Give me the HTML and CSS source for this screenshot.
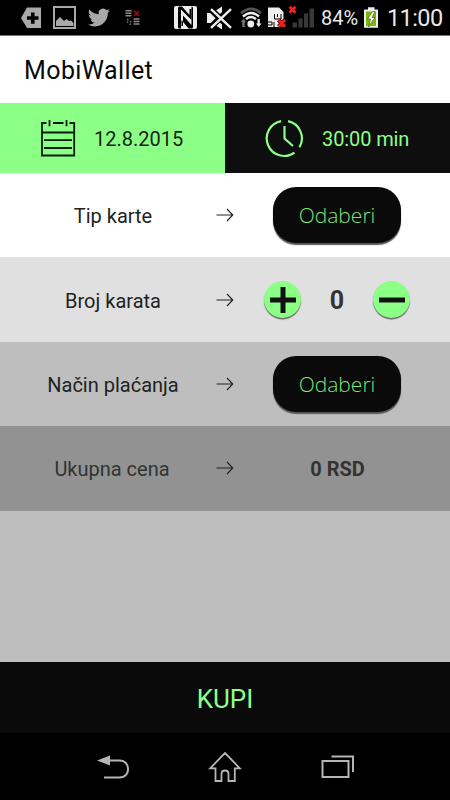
FILE: index.html
```html
<!DOCTYPE html>
<html lang="sr">
<head>
<meta charset="utf-8">
<title>MobiWallet</title>
<link rel="stylesheet" href="styles.css">
</head>
<body>
<div class="screen">
  <header class="status">
    <svg class="icon" width="46" height="36" viewBox="0 0 46 36"><path fill="#a9a9a9" fill-rule="evenodd" d="M27 7.5H41V28H27L21 18ZM31 12.5V16.3H27V19.7H31V23.8H34.6V19.7H38.5V16.3H34.6V12.5Z"/></svg>
    <svg class="icon" width="36" height="36" viewBox="46 0 36 36"><path fill="none" stroke="#a9a9a9" stroke-width="2" d="M54 7H75V28H54Z"/><path fill="#a9a9a9" d="M56 26V21L60 17L64 21L66.5 19L69 21L71 20.5L73.5 23V26Z"/></svg>
    <svg class="icon" width="36" height="36" viewBox="82 0 36 36"><path fill="#a9a9a9" transform="translate(88 6.5) scale(.92)" d="M23.9 4.6a10 10 0 0 1-2.8.8 5 5 0 0 0 2.1-2.7 10 10 0 0 1-3.1 1.2 4.9 4.9 0 0 0-8.4 4.5A14 14 0 0 1 1.6 3.2a4.9 4.9 0 0 0 1.600 6.500 5 5 0 0 1-2.300-.6c0 2.300 1.600 4.400 4 4.900a5 5 0 0 1-2.200.1 4.900 4.900 0 0 0 4.600 3.400A10 10 0 0 1 0 19.500a14 14 0 0 0 7.500 2.200c9.100 0 14.300-7.700 14-14.600a10 10 0 0 0 2.400-2.500z"/></svg>
    <svg class="icon" width="52" height="36" viewBox="118 0 52 36"><path stroke="#8a8a8a" stroke-width="1.400" d="M125.500 10.700H131.500M125.500 13.200H131.500M125.500 15.700H131.500M133.500 19H139.500M133.500 21.500H139.500M133.500 24H139.500"/><path stroke="#777" stroke-width="1.500" d="M127 19.500H128.500M130 21.800H131.500M126.800 22H128.300M129.500 24.300H131"/><path stroke="#a20c0c" stroke-width="1.500" d="M134 11L139 16M139 11L134 16"/></svg>
    <svg class="icon" width="32" height="36" viewBox="170 0 32 36"><rect x="174" y="6" width="23" height="23" rx="2" fill="#eee"/><path fill="#000" d="M178 8Q178 6.500 179.500 6.500H182L189.500 15V9H191.500V20L181 9.500V28.500H179.500Q178 28.500 178 27Z"/><path fill="#000" d="M193 27Q193 28.500 191.500 28.500H188.500L181.500 20V26H183V15.500L191.500 25V6.500Q193 6.500 193 8Z"/></svg>
    <svg class="icon" width="34" height="36" viewBox="202 0 34 36"><path fill="#eee" d="M207 13H212L222 6.500V29.500L212 23H207Z"/><path stroke="#000" stroke-width="6" d="M211 9.500L229 27M229 9.500L211 27"/><path stroke="#eee" stroke-width="2.400" d="M211 9.200L231 27.800M231 9.200L211 27.800"/></svg>
    <svg class="icon" width="30" height="36" viewBox="236 0 30 36"><path fill="none" stroke="#555" stroke-width="2.600" d="M241 13.200Q251 4.500 261 13.200"/><path fill="none" stroke="#eee" stroke-width="2.400" d="M243 16.500Q251 9.500 259 16.500M246 19.200Q251 15 256 19.200"/><circle cx="250.800" cy="24" r="3.400" fill="#eee"/><path fill="#777" d="M243.500 18.500L246 22H244.700V27H242.300V22H241Z"/><path fill="#eee" d="M257.500 19H259.800V23.500H261.500L258.700 27L256 23.500H257.500Z"/></svg>
    <svg class="icon" width="22" height="36" viewBox="266 0 22 36"><path fill="#eee" d="M268 7.500H279L283.500 12V27H268Z"/><path fill="none" stroke="#000" stroke-width="1" d="M274.500 14V19H281V14M277.500 14V17M268 22H272V25H268M274 22V27"/><path stroke="#300" stroke-width="4" d="M278.500 20L285 26.500M285 20L278.500 26.500"/><path stroke="#f32222" stroke-width="2.800" d="M278.500 20L285 26.500M285 20L278.500 26.500"/></svg>
    <svg class="icon" width="32" height="36" viewBox="288 0 32 36"><path fill="#383838" d="M292.500 22.500H297V27.500H292.500ZM298.500 18.500H302.500V27.500H298.500ZM304 13.500H308V27.500H304ZM309.500 8.500H314V27.500H309.500Z"/><path stroke="#f32222" stroke-width="2.800" d="M289.500 6.800L295.500 12.800M295.500 6.800L289.500 12.800"/></svg>
    <span class="percent">84%</span>
    <svg class="icon" width="26" height="36" viewBox="360 0 26 36"><path fill="#eee" d="M364 9.500H368V7.200H374.500V9.500H378V27.800H364Z"/><path fill="#79b900" d="M366 11.500H376V26H366Z"/><path fill="#fff" stroke="#455d16" stroke-width=".7" d="M372.500 11.500L367.500 19H370.500L368.500 27L375 17.500H372L375 11.500Z"/></svg>
    <span class="clock">11:00</span>
  </header>
  <div class="title"><span class="title-text">MobiWallet</span></div>
  <div class="tabs">
    <div class="tab tab-date">
      <svg class="icon" width="36" height="38" viewBox="40 119 36 38"><path fill="none" stroke="#0b1d0a" stroke-width="1.800" d="M46.500 123H42V155.500H74.200V123H69.500M53 123H63.500M49.500 120V126.200M66.500 120V126.200M42 132.500H74M44 140.200H72M44 148H72"/></svg>
      <span class="date">12.8.2015</span>
    </div>
    <div class="tab tab-time">
      <svg class="icon" width="40" height="40" viewBox="265 118 40 40"><path fill="none" stroke="#8cff86" stroke-width="2.200" d="M281.200 121.200A17.500 17.500 0 1 0 294.500 152.600M299.400 147.300A17.500 17.500 0 0 0 288 121.200M284.500 126V138.500L293 146"/></svg>
      <span class="time">30:00 min</span>
    </div>
  </div>
  <main class="rows">
    <div class="row row-type">
      <span class="label">Tip karte</span>
      <svg class="arrow" width="18" height="14" viewBox="0 0 18 14"><path d="M.5 7H16.500M11 1L16.800 7L11 13"/></svg>
      <div class="control"><button class="select">Odaberi</button></div>
    </div>
    <div class="row row-count">
      <span class="label">Broj karata</span>
      <svg class="arrow" width="18" height="14" viewBox="0 0 18 14"><path d="M.5 7H16.500M11 1L16.800 7L11 13"/></svg>
      <div class="control stepper">
        <button class="round"><svg width="26" height="26" viewBox="0 0 26 26"><path d="M0 13H26M13 0V26"/></svg></button>
        <span class="count">0</span>
        <button class="round"><svg width="26" height="26" viewBox="0 0 26 26"><path d="M0 13H26"/></svg></button>
      </div>
    </div>
    <div class="row row-pay">
      <span class="label">Način plaćanja</span>
      <svg class="arrow" width="18" height="14" viewBox="0 0 18 14"><path d="M.5 7H16.500M11 1L16.800 7L11 13"/></svg>
      <div class="control"><button class="select">Odaberi</button></div>
    </div>
    <div class="row row-total">
      <span class="label label-total">Ukupna cena</span>
      <svg class="arrow" width="18" height="14" viewBox="0 0 18 14"><path d="M.5 7H16.500M11 1L16.800 7L11 13"/></svg>
      <div class="control"><span class="total">0 RSD</span></div>
    </div>
  </main>
  <button class="buy">KUPI</button>
  <nav class="nav">
    <svg class="icon" width="34" height="26" viewBox="96 756 34 26"><path fill="#b5b5b5" d="M97 762.500L110 757.500V767.500Z"/><path fill="none" stroke="#b5b5b5" stroke-width="2" d="M109 762.500H119.500C131 762.500 131 779.500 119.500 779.500H104"/></svg>
    <svg class="icon" width="34" height="32" viewBox="208 750 34 32"><path fill="none" stroke="#b5b5b5" stroke-width="1.800" d="M225 752L239.800 767.300H234.800V780H228.500V773Q228.500 769.500 225 769.500Q221.500 769.500 221.500 773V780H215.500V767.300H210.200Z"/></svg>
    <svg class="icon" width="34" height="24" viewBox="320 758 34 24"><path fill="none" stroke="#b5b5b5" stroke-width="2" d="M322.500 764H348.500V780H322.500ZM331.500 759.500H353V775"/></svg>
  </nav>
</div>
</body>
</html>
```
FILE: styles.css
```css
* { box-sizing: border-box; }
body { margin: 0; font-family: Roboto, sans-serif; }
button { border: 0; padding: 0; font: inherit; }
svg { display: block; flex: none; }
.screen { width: 450px; height: 800px; display: flex; flex-direction: column; background: #bebebe; }
.status { height: 36px; display: flex; background: #000; color: #e8e8e8; line-height: 37px; border-bottom: 1px solid #777; white-space: nowrap; }
.percent { width: 40px; padding-left: 1px; font-size: 20px; }
.clock { padding-left: 1px; font-size: 23.500px; letter-spacing: -.6px; }
.title { height: 67px; padding-left: 24px; display: flex; align-items: center; background: #fff; color: #080808; font-size: 25px; }
.title-text { padding-top: 2px; letter-spacing: .4px; }
.tabs { height: 70px; display: flex; font-size: 20px; }
.tab { width: 225px; display: flex; align-items: center; }
.tab-date { padding-left: 40px; gap: 18px; background: #8cff86; color: #142412; }
.tab-time { padding-left: 40px; gap: 17px; background: #0e0e0e; color: #8cff86; }
.date { padding-top: 2px; }
.time { padding-top: 2px; letter-spacing: -.1px; }
.rows { flex: 1; color: #222; }
.row { height: 84.400px; display: flex; align-items: center; font-size: 20px; }
.row-type { background: #fff; }
.row-count { background: #e0e0e0; }
.row-pay { background: #bebebe; }
.row-total { background: #929292; color: #333; }
.label { width: 216px; padding: 2px 0 0 10px; text-align: center; }
.label-total { padding-left: 8px; }
.arrow { fill: none; stroke: #222; stroke-width: 1.100; }
.control { width: 216px; display: flex; align-items: center; justify-content: center; padding-right: 10px; }
.select { width: 128px; height: 56px; border-radius: 23px; background: #0a0a0a; color: #7be575; font-family: "Open Sans", sans-serif; font-size: 21px; font-weight: 300; box-shadow: 0 2px 1px #555; }
.stepper { justify-content: space-between; padding: 0 40px 0 30px; }
.round { width: 37px; height: 37px; display: flex; align-items: center; justify-content: center; border-radius: 50%; background: #8cff86; box-shadow: 0 1.500px 1px #666; }
.round path { stroke: #111; stroke-width: 5; }
.count { padding-top: 2px; font-size: 25px; font-weight: 700; color: #333; }
.total { padding: 2px 0 0 1px; font-weight: 700; color: #333; }
.buy { height: 71px; padding-top: 2px; background: #0a0a0a; color: #8cff86; font-size: 26px; }
.nav { height: 67px; padding: 0 96px; display: flex; align-items: center; justify-content: space-between; background: #000; }
```
